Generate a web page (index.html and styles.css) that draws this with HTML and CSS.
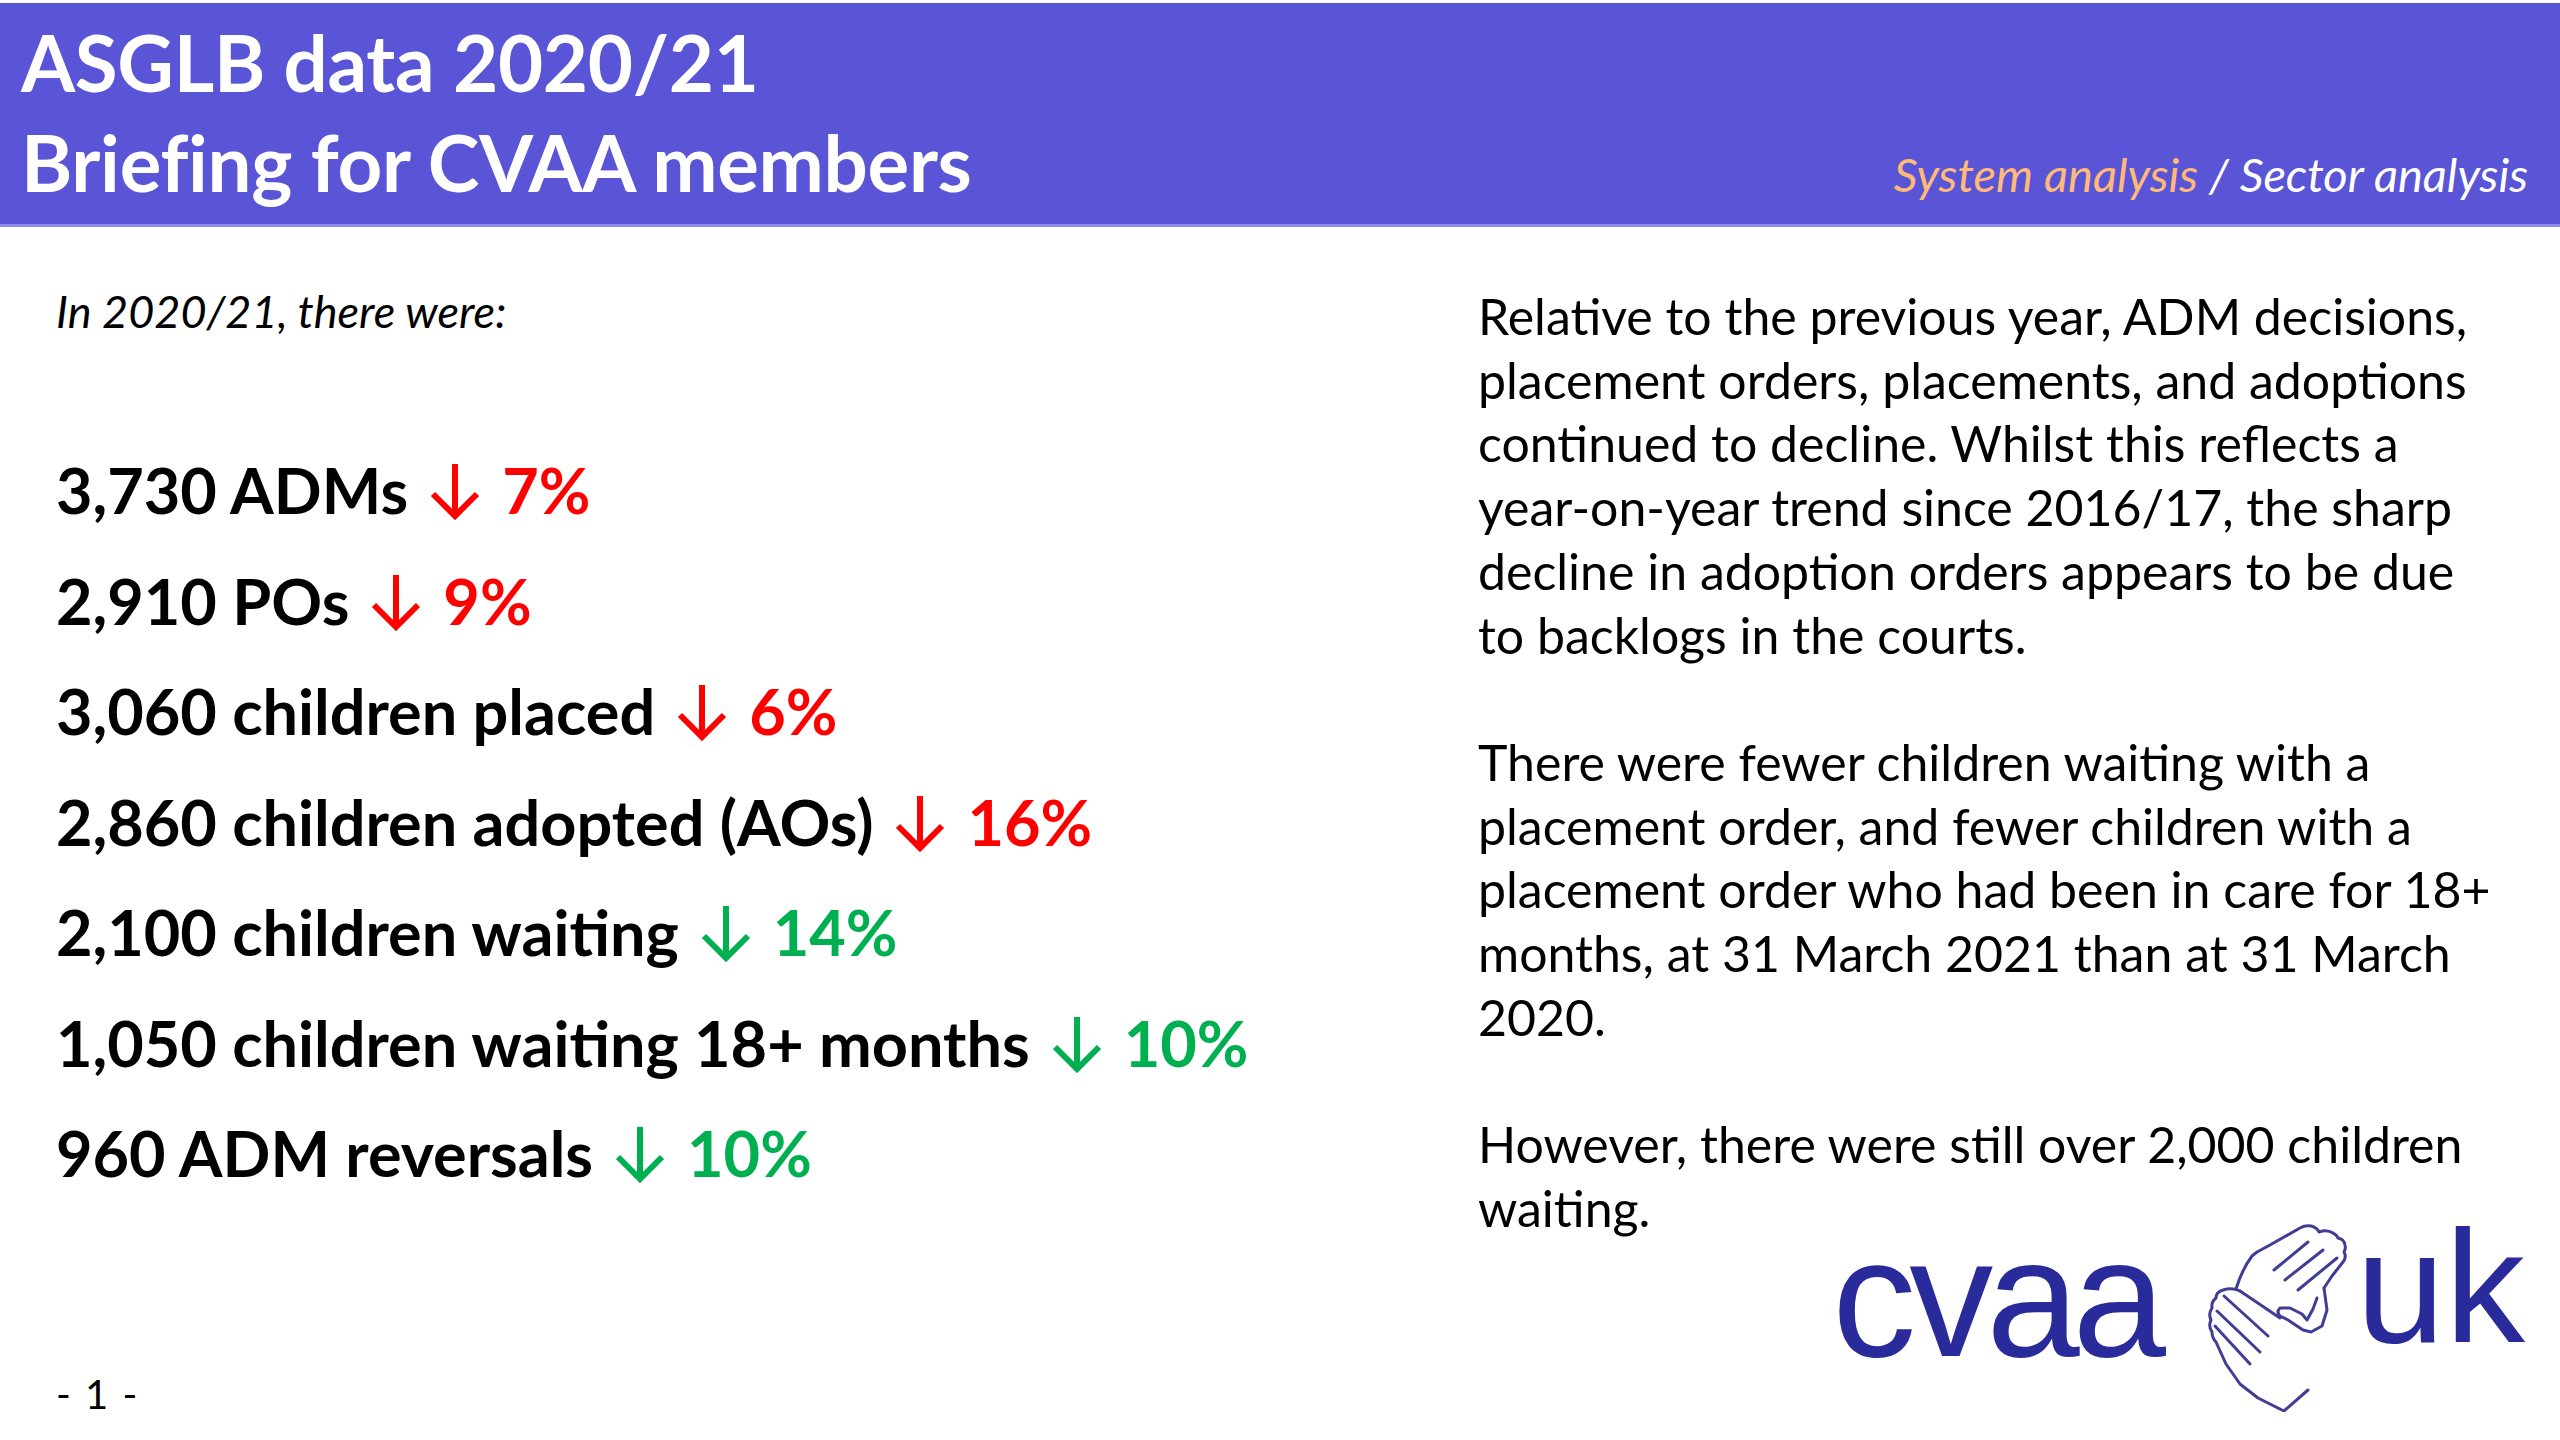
FILE: index.html
```html
<!DOCTYPE html>
<html lang="en">
<head>
<meta charset="utf-8">
<title>ASGLB data 2020/21 – Briefing for CVAA members</title>
<link rel="stylesheet" href="styles.css">
</head>
<body>
<div class="slide">
  <header class="band">
    <h1 class="title">ASGLB data 2020/21<br>Briefing for CVAA members</h1>
    <div class="crumbs"><span class="active">System analysis</span> / Sector analysis</div>
  </header>

  <main class="content">
    <section class="stats">
      <p class="intro">In 2020/21, there were:</p>
      <ul class="list">
        <li class="row">3,730 ADMs<svg class="arrow red" viewBox="0 0 50 56"><path d="M25 0V52M3 30L25 52L47 30"/></svg><span class="pct red">7%</span></li>
        <li class="row">2,910 POs<svg class="arrow red" viewBox="0 0 50 56"><path d="M25 0V52M3 30L25 52L47 30"/></svg><span class="pct red">9%</span></li>
        <li class="row">3,060 children placed<svg class="arrow red" viewBox="0 0 50 56"><path d="M25 0V52M3 30L25 52L47 30"/></svg><span class="pct red">6%</span></li>
        <li class="row">2,860 children adopted (AOs)<svg class="arrow red" viewBox="0 0 50 56"><path d="M25 0V52M3 30L25 52L47 30"/></svg><span class="pct red">16%</span></li>
        <li class="row">2,100 children waiting<svg class="arrow green" viewBox="0 0 50 56"><path d="M25 0V52M3 30L25 52L47 30"/></svg><span class="pct green">14%</span></li>
        <li class="row">1,050 children waiting 18+ months<svg class="arrow green" viewBox="0 0 50 56"><path d="M25 0V52M3 30L25 52L47 30"/></svg><span class="pct green">10%</span></li>
        <li class="row">960 ADM reversals<svg class="arrow green" viewBox="0 0 50 56"><path d="M25 0V52M3 30L25 52L47 30"/></svg><span class="pct green">10%</span></li>
      </ul>
    </section>
    <section class="notes">
      <p>Relative to the previous year, ADM decisions,<br>placement orders, placements, and adoptions<br>continued to decline. Whilst this reflects a<br>year-on-year trend since 2016/17, the sharp<br>decline in adoption orders appears to be due<br>to backlogs in the courts.</p>
      <p>There were fewer children waiting with a<br>placement order, and fewer children with a<br>placement order who had been in care for 18+<br>months, at 31 March 2021 than at 31 March<br>2020.</p>
      <p>However, there were still over 2,000 children<br>waiting.</p>
    </section>
  </main>

  <footer class="foot">
    <div class="pageno">- 1 -</div>
    <div class="logo">
      <span class="logo-cvaa">cvaa</span>
      <svg class="hands" viewBox="0 0 170 200">
        <g fill="none" stroke="#403e94" stroke-width="3" stroke-linecap="round" stroke-linejoin="round">
          <path d="M46 77C50 64 56 52 62 44L67 40L80 33L110 16Q117 12 124 15Q128 17 129 20Q137 17 143 21Q147 23 148 26Q154 27 155 33Q156 37 154 40Q157 45 153 50L142 64L134 76"/>
          <path d="M84 58L118 30M95 68L133 38M108 78L147 46"/>
          <path d="M134 76L137 98L132 114L121 120L113 118L98 108L90 104Q86 100 90 96L100 96L112 102L117 108L123 97L127 86"/>
          <path d="M50 79Q42 75 33 78Q26 80 26 86Q21 90 22 96Q18 102 21 108Q18 114 22 120Q22 126 26 130L36 152L50 172L68 186L94 199L118 178"/>
          <path d="M50 79L90 106"/>
          <path d="M34 84L78 124M27 99L70 140M25 114L60 152"/>
        </g>
      </svg>
      <span class="logo-uk">uk</span>
    </div>
  </footer>
</div>
</body>
</html>
```

FILE: styles.css
```css
html, body {
  margin: 0;
  padding: 0;
  background: #ffffff;
}

.slide {
  width: 2560px;
  height: 1440px;
  display: flex;
  flex-direction: column;
  overflow: hidden;
  font-family: Lato, "Open Sans", "Liberation Sans", sans-serif;
  color: #000000;
}

.band {
  margin-top: 3px;
  height: 224px;
  box-sizing: border-box;
  background: #5a55d6;
  border-bottom: 3px solid #8e8ae8;
  display: flex;
  justify-content: space-between;
  align-items: last baseline;
  padding: 9px 32px 12px 21px;
}

.title {
  margin: 0;
  font-size: 78px;
  line-height: 100px;
  font-weight: 700;
  color: #ffffff;
  white-space: nowrap;
  letter-spacing: -0.3px;
}

.crumbs {
  font-size: 47px;
  font-style: italic;
  color: #ffffff;
  white-space: nowrap;
}

.crumbs .active {
  color: #ffb978;
}

.content {
  height: 973px;
  box-sizing: border-box;
  display: grid;
  grid-template-columns: 1422px 1fr;
  padding: 58px 0 0 56px;
}

.intro {
  margin: 0;
  padding-top: 2px;
  font-size: 45px;
  line-height: 48px;
  font-style: italic;
}

.list {
  list-style: none;
  margin: 100px 0 0 0;
  padding: 0;
}

.row {
  font-size: 63px;
  line-height: 110.5px;
  font-weight: 700;
  white-space: nowrap;
}

.arrow {
  width: 50px;
  height: 56px;
  vertical-align: -6px;
  margin-left: 22px;
  fill: none;
  stroke-width: 6;
  stroke-linejoin: miter;
}

.arrow.red { stroke: #ff0000; }
.arrow.green { stroke: #00b050; }

.pct {
  margin-left: 22px;
}

.pct.red { color: #ff0000; }
.pct.green { color: #00b050; }

.notes p {
  margin: 0 0 63.7px 0;
  font-size: 50px;
  line-height: 63.7px;
  white-space: nowrap;
}

.foot {
  flex: 1;
  display: flex;
  justify-content: space-between;
  align-items: flex-start;
  padding: 0 35px 0 56px;
}

.pageno {
  align-self: flex-end;
  margin-bottom: 26px;
  font-size: 40px;
  line-height: 40px;
  word-spacing: 4px;
}

.logo {
  display: flex;
  align-items: flex-start;
  color: #2a2b9b;
  font-family: "Liberation Sans", Arial, sans-serif;
}

.logo-cvaa {
  font-size: 168px;
  line-height: 168px;
  letter-spacing: -7px;
  margin-top: 14px;
}

.hands {
  width: 170px;
  height: 200px;
  margin-top: 12px;
  margin-left: 31px;
}

.logo-uk {
  font-size: 160px;
  line-height: 160px;
  margin-top: 7px;
  margin-left: -4px;
}
```
